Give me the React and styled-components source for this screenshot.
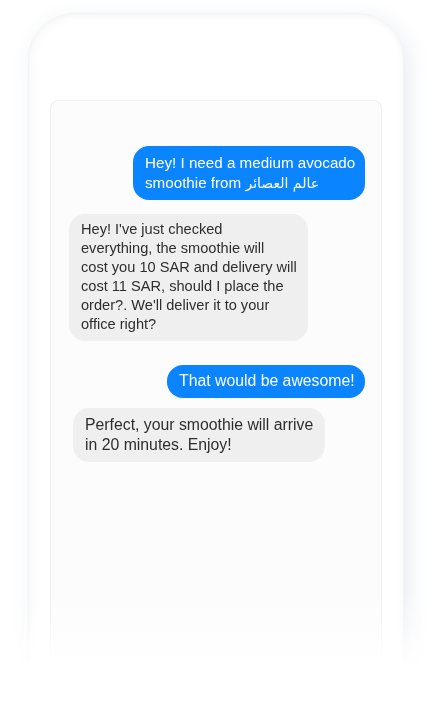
import React from 'react';
import styled, { createGlobalStyle } from 'styled-components';

const GlobalStyle = createGlobalStyle`
  html, body {
    margin: 0;
    padding: 0;
    background: #ffffff;
  }
  body {
    font-family: "Liberation Sans", "DejaVu Sans", Arial, sans-serif;
  }
`;

const Stage = styled.div`
  height: 723px;
  padding: 13px 29px 0 28px;
  box-sizing: border-box;
  overflow: hidden;
  -webkit-mask-image: linear-gradient(to bottom, #000 0, #000 595px, transparent 668px);
  mask-image: linear-gradient(to bottom, #000 0, #000 595px, transparent 668px);
`;

const Phone = styled.div`
  width: 376px;
  height: 720px;
  box-sizing: border-box;
  padding: 86px 21px 0 21px;
  border-radius: 46px;
  background: #ffffff;
  border: 1px solid #f2f3f5;
  box-shadow:
    inset 3px 3px 8px rgba(0, 0, 0, 0.03),
    inset -2px 0 6px rgba(0, 0, 0, 0.025),
    5px 6px 22px rgba(70, 100, 160, 0.12);
`;

const Screen = styled.div`
  height: 640px;
  border: 1px solid #edeff2;
  border-radius: 8px;
  background: #fcfcfd;
  padding: 45px 16px 0 18px;
  display: flex;
  flex-direction: column;
`;

const Bubble = styled.div`
  box-sizing: border-box;
  width: ${(p) => p.$w}px;
  align-self: ${(p) => (p.$me ? 'flex-end' : 'flex-start')};
  margin-top: ${(p) => p.$top || 0}px;
  margin-left: ${(p) => p.$left || 0}px;
  padding: ${(p) => p.$pad || '7px 12px'};
  border-radius: 16px;
  background: ${(p) => (p.$me ? '#0a84ff' : '#efefef')};
  color: ${(p) => (p.$me ? '#ffffff' : '#2e2e2e')};
  font-size: ${(p) => p.$size || 15}px;
  line-height: ${(p) => p.$lh || 20}px;
  white-space: nowrap;
`;

const Arabic = styled.span`
  font-family: "DejaVu Sans", "Noto Sans", sans-serif;
  font-size: 14px;
`;

export default function App() {
  return (
    <>
      <GlobalStyle />
      <Stage>
        <Phone>
          <Screen>
            <Bubble $me $w={232} $size={15.2}>
              Hey! I need a medium avocado
              <br />
              smoothie from <Arabic dir="rtl">عالم العصائر</Arabic>
            </Bubble>
            <Bubble $w={239} $top={14} $size={14.6} $lh={19} $pad="6px 12px 7px">
              Hey! I've just checked
              <br />
              everything, the smoothie will
              <br />
              cost you 10 SAR and delivery will
              <br />
              cost 11 SAR, should I place the
              <br />
              order?. We'll deliver it to your
              <br />
              office right?
            </Bubble>
            <Bubble $me $w={198} $top={24} $size={15.8} $pad="6px 12px 7px">
              That would be awesome!
            </Bubble>
            <Bubble $w={252} $top={10} $left={4} $size={15.8}>
              Perfect, your smoothie will arrive
              <br />
              in 20 minutes. Enjoy!
            </Bubble>
          </Screen>
        </Phone>
      </Stage>
    </>
  );
}
